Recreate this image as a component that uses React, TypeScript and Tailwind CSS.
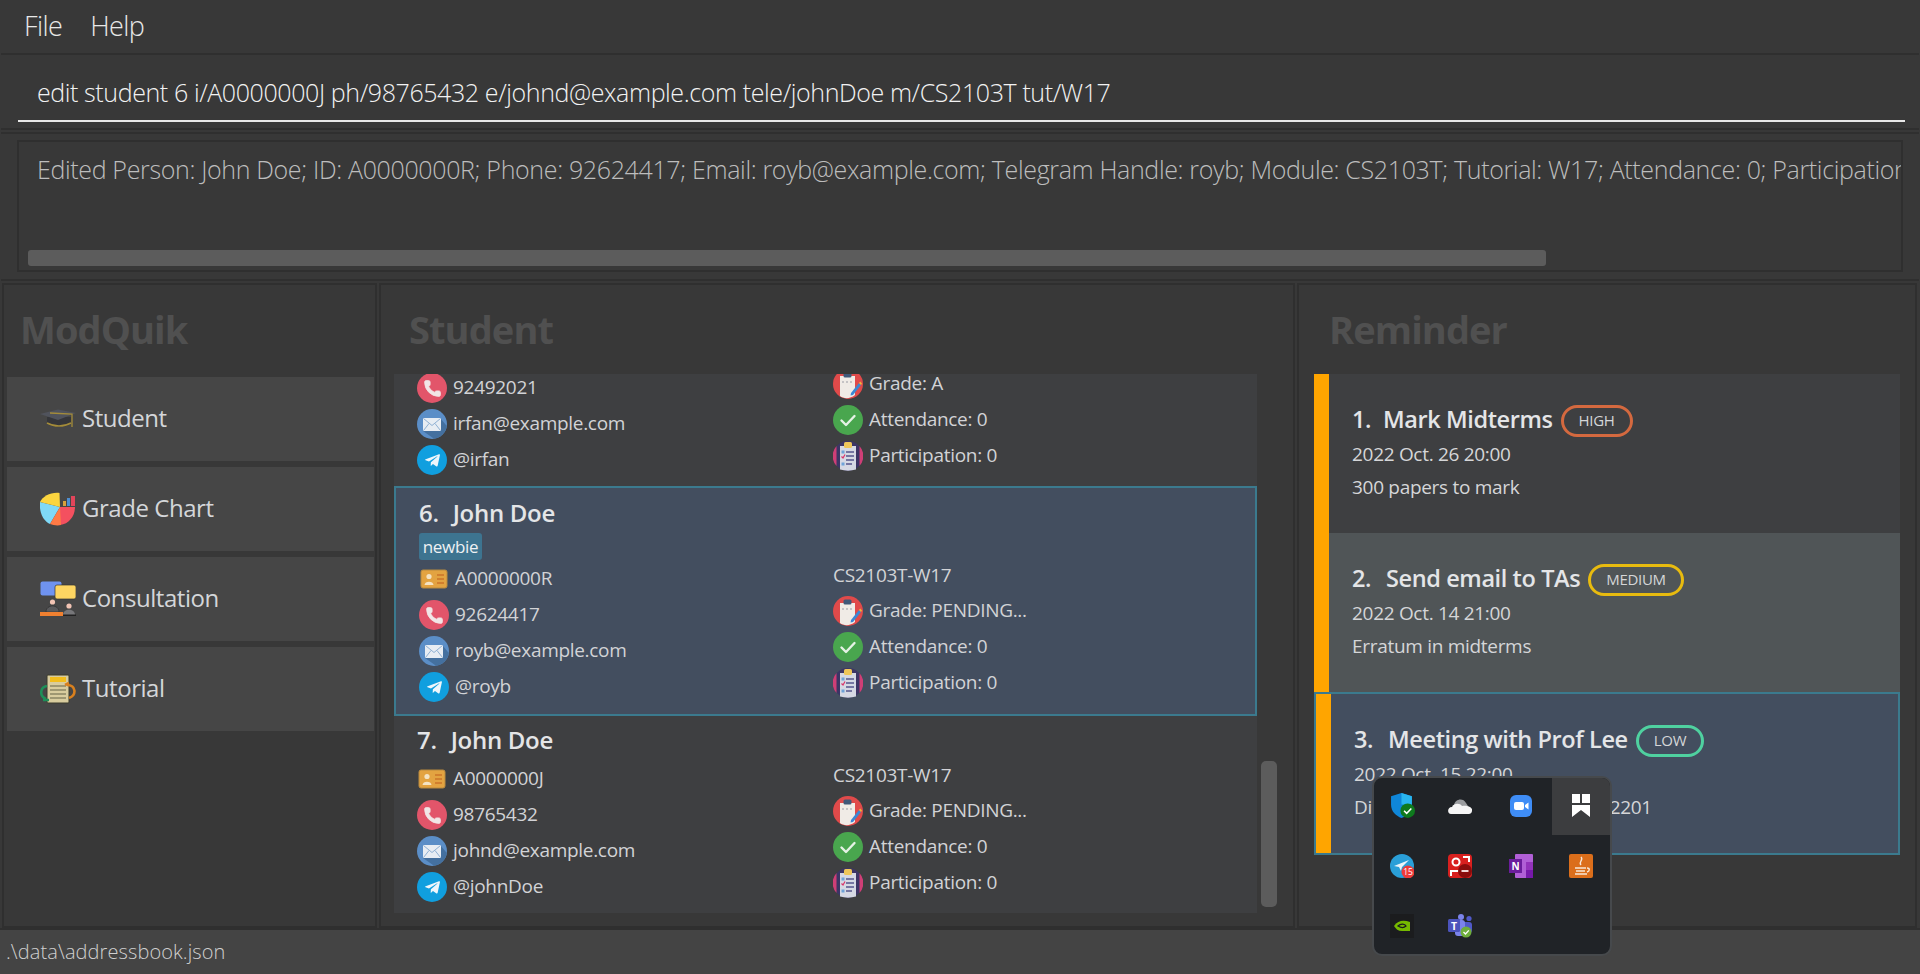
import type { ReactNode } from 'react'
import { FaTelegramPlane } from 'react-icons/fa'
import { Phone } from 'lucide-react'

type Student = {
  index: number
  name: string
  tag?: string
  id: string
  phone: string
  email: string
  tele: string
  module: string
  grade: string
}

const font = 'font-["Open_Sans","Noto_Sans",sans-serif]'

function PhoneIcon() {
  return (
    <span className="flex h-[30px] w-[30px] shrink-0 items-center justify-center rounded-full bg-[#e2556a] text-[#f1e6e6]">
      <Phone className="h-[19px] w-[19px]" fill="currentColor" strokeWidth={1} />
    </span>
  )
}

function MailIcon() {
  return (
    <svg viewBox="0 0 30 30" className="h-[30px] w-[30px] shrink-0">
      <circle cx="15" cy="15" r="15" fill="#5b8ec7" />
      <path d="M6 22 L17 29.8 C24 29 29 23 29.8 17 L24 10 Z" fill="#44709f" />
      <rect x="6" y="9" width="18" height="13" rx="1" fill="#e8edf3" />
      <path d="M6.5 9.5 L15 16.5 L23.5 9.5 M6.5 21.5 L12 14.5 M23.5 21.5 L18 14.5" fill="none" stroke="#8fb0d3" strokeWidth="1" />
    </svg>
  )
}

function TelegramIcon() {
  return (
    <span className="flex h-[30px] w-[30px] shrink-0 items-center justify-center rounded-full bg-[#109fdf] text-[#eef6fb]">
      <FaTelegramPlane className="h-[17px] w-[17px]" />
    </span>
  )
}

function IdIcon() {
  return (
    <svg viewBox="0 0 30 30" className="h-[30px] w-[30px] shrink-0">
      <rect x="2" y="6" width="26" height="18" rx="2" fill="#e3a341" stroke="#b98a3f" strokeWidth="1" />
      <circle cx="10" cy="12.5" r="2.6" fill="#f4e3c3" />
      <path d="M5.5 21 C5.5 16.5 14.5 16.5 14.5 21 Z" fill="#f4e3c3" />
      <path d="M18 11 H25 M18 15 H25 M18 19 H25" stroke="#d17f2e" strokeWidth="2" />
    </svg>
  )
}

function GradeIcon() {
  return (
    <svg viewBox="0 0 30 30" className="h-[30px] w-[30px] shrink-0">
      <circle cx="15" cy="15" r="15" fill="#e04a4a" />
      <path d="M7 7 H22 V26 C17 30 11 30 7 27 Z" fill="#f0ebe6" />
      <rect x="10.5" y="3.5" width="8" height="5" rx="1.5" fill="#3f5878" />
      <path d="M10 12 V14 M14 12 V14 M18 12 V14" stroke="#a9a9b0" strokeWidth="1.2" />
      <path d="M18 24 L26 14 L28 16 L20 26 L17.5 26.5 Z" fill="#3b87d4" />
      <path d="M26 14 L27.2 12.6 L29 14.4 L28 16 Z" fill="#f0b43c" />
    </svg>
  )
}

function AttendanceIcon() {
  return (
    <svg viewBox="0 0 30 30" className="h-[30px] w-[30px] shrink-0">
      <circle cx="15" cy="15" r="15" fill="#49a64e" />
      <path d="M8.5 15.5 L13 20 L21.5 11" fill="none" stroke="#e5f2e5" strokeWidth="2.4" strokeLinecap="round" strokeLinejoin="round" />
    </svg>
  )
}

function ParticipationIcon() {
  return (
    <svg viewBox="0 0 30 30" className="h-[30px] w-[30px] shrink-0">
      <circle cx="15" cy="15" r="15" fill="#3c3565" />
      <path d="M3.5 5 A15 15 0 0 0 3.5 25 Z M26.5 5 A15 15 0 0 1 26.5 25 Z" fill="#cf3f76" />
      <path d="M7 5 H23 V28.5 C18 30 12 30 7 28.5 Z" fill="#d6d9e4" />
      <rect x="11" y="1" width="8" height="6" rx="1.5" fill="#eec65a" />
      <path d="M13 11 H21 M13 15 H21 M13 19 H21 M13 23 H19" stroke="#55568c" strokeWidth="1.4" />
      <rect x="8.5" y="9.5" width="3" height="3" fill="#6fa3d8" />
      <path d="M8.5 15.5 L10 17 L12 13.5" fill="none" stroke="#d9366b" strokeWidth="1.2" />
      <rect x="8.5" y="21.5" width="3" height="3" fill="#6fa3d8" />
    </svg>
  )
}

function Row({ icon, children }: { icon: ReactNode; children: ReactNode }) {
  return (
    <div className="flex h-[36px] items-center gap-[6px] whitespace-nowrap text-[19px] tracking-[-0.3px] text-[#d2d3d6]">
      {icon}
      <span className="pb-[2px]">{children}</span>
    </div>
  )
}

function PartialCard({ s }: { s: Student }) {
  // only the lower part of this card is scrolled into view
  return (
    <div className="flex h-[112px] bg-[#3e3f41] pl-[23px]">
      <div className="-mt-[4px] w-[416px]">
        <Row icon={<PhoneIcon />}>{s.phone}</Row>
        <Row icon={<MailIcon />}>{s.email}</Row>
        <Row icon={<TelegramIcon />}>{s.tele}</Row>
      </div>
      <div className="-mt-[8px]">
        <Row icon={<GradeIcon />}>Grade: {s.grade}</Row>
        <Row icon={<AttendanceIcon />}>Attendance: 0</Row>
        <Row icon={<ParticipationIcon />}>Participation: 0</Row>
      </div>
    </div>
  )
}

function StudentCard({ s, selected }: { s: Student; selected?: boolean }) {
  return (
    <div
      className={
        selected
          ? 'border-2 border-[#3b7a8e] bg-[#434e5f] pb-[9px] pl-[23px] pt-[9px]'
          : 'bg-[#3e3f41] pb-[8px] pl-[23px] pt-[8px]'
      }
    >
      <div className="flex h-[34px] items-center gap-[14px] whitespace-pre pb-[2px] text-[24px] font-semibold tracking-[-0.3px] text-[#e4e5e7]">
        <span>{s.index}.</span>
        <span>{s.name}</span>
      </div>
      {s.tag ? (
        <div className="mb-[1px] mt-[2px] flex h-[27px] w-[63px] items-center justify-center rounded-[3px] bg-[#3d7490] text-[17px] font-medium tracking-[-0.3px] text-[#eef1f3]">
          {s.tag}
        </div>
      ) : (
        <div className="h-[3px]" />
      )}
      <div className="flex">
        <div className={selected ? 'w-[414px]' : 'w-[416px]'}>
          <Row icon={<IdIcon />}>{s.id}</Row>
          <Row icon={<PhoneIcon />}>{s.phone}</Row>
          <Row icon={<MailIcon />}>{s.email}</Row>
          <Row icon={<TelegramIcon />}>{s.tele}</Row>
        </div>
        <div className="-mt-[2px]">
          <div className="flex h-[34px] items-center pb-[1px] text-[19px] tracking-[-0.3px] text-[#d2d3d6]">{s.module}</div>
          <Row icon={<GradeIcon />}>Grade: {s.grade}</Row>
          <Row icon={<AttendanceIcon />}>Attendance: 0</Row>
          <Row icon={<ParticipationIcon />}>Participation: 0</Row>
        </div>
      </div>
    </div>
  )
}

function CapIcon() {
  return (
    <svg viewBox="0 0 36 20" className="h-[20px] w-[36px] shrink-0">
      <path d="M7 8 V15 C14 19 24 19 31 15 V8 Z" fill="#35363a" />
      <path d="M0 5 L18 0.5 L36 4 L18 11 Z" fill="#50535c" />
      <path d="M7 14 C14 18 24 18 31 14" fill="none" stroke="#a48c3a" strokeWidth="1.5" />
      <path d="M10 4 L32 5 V18" fill="none" stroke="#a48c3a" strokeWidth="1.3" />
    </svg>
  )
}

function PieIcon() {
  return (
    <svg viewBox="0 0 36 36" className="h-[36px] w-[36px] shrink-0">
      <path d="M20 16 L10 33 C3 30 -1 21 0 11 Z" fill="#7fd9f7" />
      <path d="M20 16 L0 11 C3 5 11 1 19.5 2 Z" fill="#fbd53f" />
      <path d="M20 16 H35 C35 25 29 33 20 34 Z" fill="#f4505f" />
      <path d="M20 16 L10 33 C13 34 17 35 21 34 Z" fill="#ff7a45" />
      <path d="M23 15 V10 H26 V15 Z" fill="#d9a13b" />
      <path d="M27 15 V7 H30 V15 Z" fill="#4d8ed0" />
      <path d="M31 15 V5 H35 V15 Z" fill="#e2455a" />
    </svg>
  )
}

function ConsultIcon() {
  return (
    <svg viewBox="0 0 36 36" className="h-[36px] w-[36px] shrink-0">
      <rect x="0.5" y="0.5" width="21" height="14" rx="2" fill="#6f93f0" />
      <rect x="15" y="4" width="21" height="14" rx="2" fill="#fdd562" stroke="#333" strokeWidth="0.7" />
      <circle cx="12.5" cy="21" r="2.6" fill="#f2c4b4" />
      <circle cx="29" cy="25" r="2.6" fill="#f2c4b4" />
      <path d="M6 31 C6 23 19 23 19 31 Z" fill="#5a5a5c" stroke="#2a2a2a" strokeWidth="0.6" />
      <path d="M23 34 C23 27 35 27 35 34 Z" fill="#77777a" />
      <rect x="0" y="31" width="23" height="4" fill="#f08030" />
      <rect x="23" y="33.5" width="13" height="1.5" fill="#222" />
    </svg>
  )
}

function TutorialIcon() {
  return (
    <svg viewBox="0 0 36 30" className="h-[30px] w-[36px] shrink-0">
      <rect x="7" y="1" width="22" height="28" rx="1" fill="#d8cc9e" stroke="#3b3a2c" strokeWidth="1" />
      <rect x="10" y="3" width="16" height="5" fill="#f2bd1d" />
      <path d="M10 12 H26 M10 16 H26 M10 20 H26 M10 24 H26" stroke="#8b8564" strokeWidth="1.4" />
      <path d="M7 12 C0 13 -1 22 6 25 M3 26 L9 26" fill="none" stroke="#1e8f58" strokeWidth="2.6" />
      <path d="M27 11 C36 11 37 21 29 24 M25 11 L29 9" fill="none" stroke="#d9801e" strokeWidth="2.6" />
    </svg>
  )
}

function NavButton({ icon, label }: { icon: ReactNode; label: string }) {
  return (
    <div className="flex h-[84px] items-center bg-[#464646] pl-[33px] text-[24px] font-medium tracking-[-0.45px] text-[#d4d6d9]">
      <span className="flex w-[42px] items-center">{icon}</span>
      <span className="pb-[2px]">{label}</span>
    </div>
  )
}

function PanelTitle({ children }: { children: ReactNode }) {
  return <div className="flex h-[89px] items-center text-[38px] font-bold tracking-[-0.9px] text-[#505050]">{children}</div>
}

function ReminderCard({
  index, title, badge, badgeColor, date, desc, bg, selected,
}: {
  index: number; title: string; badge: string; badgeColor: string; date: string; desc: ReactNode; bg: string; selected?: boolean
}) {
  return (
    <div className={(selected ? 'h-[163px] border-2 border-[#3b7a8e] ' : 'h-[159px] ') + 'flex ' + bg}>
      <div className="w-[15px] shrink-0 bg-[#ffa500]" />
      <div className="flex flex-col justify-center pl-[23px] text-[#d5d6d8]">
        <div className="flex h-[36px] items-center gap-[8px] whitespace-pre text-[23.5px] font-semibold tracking-[-0.4px] text-[#e4e5e7]">
          <span className={'flex pb-[2px] ' + (index === 1 ? 'gap-[12px]' : 'gap-[15px]')}>
            <span>{index}.</span>
            <span>{title}</span>
          </span>
          <span className={'flex h-[32px] items-center rounded-[16px] border-[3px] px-[15px] text-[15px] font-normal tracking-[-0.3px] text-[#d5d6d8] ' + badgeColor}>{badge}</span>
        </div>
        <div className="flex h-[33px] items-center whitespace-nowrap pb-[2px] text-[19px] tracking-[-0.3px]">{date}</div>
        <div className="flex h-[33px] items-center whitespace-nowrap pb-[2px] text-[19px] tracking-[-0.3px]">{desc}</div>
      </div>
    </div>
  )
}

function TrayPopup() {
  return (
    <div className="absolute left-[1372px] top-[776px] h-[180px] w-[240px] overflow-hidden rounded-[10px] border-2 border-[#46494c] bg-[#202327]">
      <div className="grid grid-cols-[56px_59px_63px_58px] grid-rows-[57px_62px_58px]">
        <div className="flex items-center justify-center pb-[2px]">
          <svg viewBox="0 0 24 24" className="h-[25px] w-[25px]">
            <path d="M11 0 L21 3 V11 C21 18 16 22 11 24 C6 22 1 18 1 11 V3 Z" fill="#0f86d8" />
            <path d="M11 0 L21 3 V11 H11 Z" fill="#29b6f0" />
            <circle cx="17" cy="17" r="7" fill="#0e7a1d" />
            <path d="M13.5 17 L16 19.5 L20.5 14.8" fill="none" stroke="#fff" strokeWidth="1.5" />
          </svg>
        </div>
        <div className="flex items-center justify-center pb-[2px]">
          <svg viewBox="0 0 24 16" className="h-[16px] w-[24px]">
            <path d="M6 7 C7 1 15 -1 18 5 L20 8 H4 Z" fill="#9a9c9f" />
            <path d="M3 16 C-1 16 -1 9 4 9 C6 5 12 5 14 8 C19 7 25 9 24 13 C24 15 22 16 21 16 Z" fill="#f5f5f5" />
          </svg>
        </div>
        <div className="flex items-center justify-center pb-[2px]">
          <svg viewBox="0 0 22 22" className="h-[22px] w-[22px]">
            <rect width="22" height="22" rx="6" fill="#3f8df6" />
            <rect x="4" y="7" width="10" height="8" rx="2" fill="#fff" />
            <path d="M15 10 L18.5 7.5 V14.5 L15 12 Z" fill="#fff" />
          </svg>
        </div>
        <div className="flex items-center justify-center bg-[#3c3d3f] pb-[2px]">
          <svg viewBox="0 0 18 23" className="h-[23px] w-[18px]">
            <path d="M0 0 H8 V9 H0 Z M10 0 H18 V9 H10 Z M0 11 H18 V23 L9 16 L0 23 Z" fill="#fff" />
          </svg>
        </div>
        <div className="flex items-center justify-center">
          <svg viewBox="0 0 24 24" className="h-[24px] w-[24px]">
            <circle cx="12" cy="12" r="12" fill="#2a9fd8" />
            <path d="M4 12 L19 6 L12 13 L11 17 L9 13 Z" fill="#eaf5fb" />
            <circle cx="18" cy="18" r="6.5" fill="#ee3a3a" />
            <text x="18" y="21" fontSize="8.5" fill="#fff" textAnchor="middle" fontFamily="Open Sans, sans-serif">15</text>
          </svg>
        </div>
        <div className="flex items-center justify-center">
          <svg viewBox="0 0 24 24" className="h-[24px] w-[24px]">
            <rect width="24" height="24" rx="4" fill="#d8201f" />
            <circle cx="8" cy="8" r="3.5" fill="none" stroke="#fff" strokeWidth="2" />
            <path d="M3 22 V17 H12 M15 3 H21 V8" fill="none" stroke="#fff" strokeWidth="2" />
            <circle cx="17" cy="17" r="7" fill="#8a0d0d" />
            <rect x="13.5" y="16" width="7" height="2" fill="#f3d6d6" />
          </svg>
        </div>
        <div className="flex items-center justify-center">
          <svg viewBox="0 0 24 24" className="h-[24px] w-[24px]">
            <rect x="6" y="0" width="18" height="24" rx="1" fill="#b15fd6" />
            <rect x="17" y="8" width="7" height="8" fill="#9333bb" />
            <rect x="17" y="16" width="7" height="8" fill="#7719aa" />
            <rect x="0" y="5" width="13" height="14" fill="#6b1d9c" />
            <text x="6.5" y="16" fontSize="10" fontWeight="700" fill="#fff" textAnchor="middle" fontFamily="Open Sans, sans-serif">N</text>
          </svg>
        </div>
        <div className="flex items-center justify-center">
          <svg viewBox="0 0 24 24" className="h-[24px] w-[24px]">
            <rect width="24" height="24" rx="2" fill="#db6e1b" />
            <path d="M12 3 C15 6 9 8 12 11 M6 14 H17 M7 17 H16 M6 20 H18 M18 14 C21 14 21 17 18 18" fill="none" stroke="#f7e7d8" strokeWidth="1.4" />
          </svg>
        </div>
        <div className="flex items-center justify-center">
          <svg viewBox="0 0 24 24" className="h-[24px] w-[24px]">
            <rect width="24" height="24" fill="#1b1c1e" />
            <path d="M4 12 C8 6 14 6 20 8 V17 H12 C8 17 6 15 4 12 Z" fill="#76b900" />
            <path d="M8 12 C11 9 15 10 16 12 C14 14 11 14 8 12 Z" fill="none" stroke="#1b1c1e" strokeWidth="1.3" />
          </svg>
        </div>
        <div className="flex items-center justify-center">
          <svg viewBox="0 0 24 24" className="h-[24px] w-[24px]">
            <circle cx="13" cy="3" r="3" fill="#7b83eb" />
            <circle cx="21" cy="4.5" r="2.6" fill="#5059c9" />
            <rect x="13" y="8" width="11" height="11" rx="3" fill="#5059c9" />
            <rect x="7" y="6" width="10" height="16" rx="3" fill="#7b83eb" />
            <rect x="0" y="5" width="12" height="13" rx="1.5" fill="#4b53bc" />
            <text x="6" y="15.5" fontSize="10.5" fontWeight="700" fill="#fff" textAnchor="middle" fontFamily="Open Sans, sans-serif">T</text>
            <circle cx="18" cy="18" r="5.5" fill="#6fae3c" />
            <path d="M15.5 18 L17.5 20 L20.8 16.4" fill="none" stroke="#fff" strokeWidth="1.3" />
          </svg>
        </div>
      </div>
    </div>
  )
}

const students: Student[] = [
  { index: 5, name: 'Irfan', id: '', phone: '92492021', email: 'irfan@example.com', tele: '@irfan', module: '', grade: 'A' },
  { index: 6, name: 'John Doe', tag: 'newbie', id: 'A0000000R', phone: '92624417', email: 'royb@example.com', tele: '@royb', module: 'CS2103T-W17', grade: 'PENDING...' },
  { index: 7, name: 'John Doe', id: 'A0000000J', phone: '98765432', email: 'johnd@example.com', tele: '@johnDoe', module: 'CS2103T-W17', grade: 'PENDING...' },
]

export default function App() {
  return (
    <div className={'relative flex h-[974px] w-[1920px] flex-col overflow-hidden bg-[#383838] ' + font}>
      <div className="flex h-[53px] items-center gap-[28px] pl-[24px] text-[27px] font-light tracking-[-0.6px] text-[#e8e8e8]">
        <span>File</span>
        <span>Help</span>
      </div>

      <div className="mx-[1px] h-[77px] border-y-2 border-y-[#2f2f2f] pl-[17px] pr-[14px]">
        <div className="flex h-[67px] items-center whitespace-nowrap border-b-2 border-b-[#e8e8e8] pl-[19px] pt-[10px] text-[25px] font-light tracking-[-0.4px] text-[#f2f2f2]">
          edit student 6 i/A0000000J ph/98765432 e/johnd@example.com tele/johnDoe m/CS2103T tut/W17
        </div>
      </div>

      <div className="mx-[1px] mt-[2px] h-[149px] border-y-2 border-y-[#2f2f2f] px-[16px] pt-[6px]">
        <div className="relative h-[132px] overflow-hidden border-2 border-[#2f2f2f]">
          <div className="whitespace-nowrap pl-[18px] pt-[9px] text-[25px] font-light tracking-[-0.35px] text-[#bdbdbd]">
            Edited Person: John Doe; ID: A0000000R; Phone: 92624417; Email: royb@example.com; Telegram Handle: royb; Module: CS2103T; Tutorial: W17; Attendance: 0; Participation: 0
          </div>
          <div className="absolute bottom-[4px] left-[9px] h-[16px] w-[1518px] rounded-[3px] bg-[#5c5c5c]" />
        </div>
      </div>

      <div className="mt-[2px] flex h-[645px] gap-[2px] pl-[2px] pr-[3px]">
        <div className="w-[375px] border-2 border-[#2f2f2f] pl-[3px] pr-[1px]">
          <div className="pl-[13px]"><PanelTitle>ModQuik</PanelTitle></div>
          <div className="mt-[3px] flex flex-col gap-[6px]">
            <NavButton icon={<CapIcon />} label="Student" />
            <NavButton icon={<PieIcon />} label="Grade Chart" />
            <NavButton icon={<ConsultIcon />} label="Consultation" />
            <NavButton icon={<TutorialIcon />} label="Tutorial" />
          </div>
        </div>

        <div className="w-[916px] border-2 border-[#2f2f2f] pl-[13px]">
          <div className="pl-[15px]"><PanelTitle>Student</PanelTitle></div>
          <div className="flex gap-[4px]">
            <div className="h-[539px] w-[863px] overflow-hidden bg-[#3e3f41]">
              <PartialCard s={students[0]} />
              <StudentCard s={students[1]} selected />
              <StudentCard s={students[2]} />
            </div>
            <div className="mt-[387px] h-[146px] w-[16px] rounded-[5px] bg-[#5c5c5c]" />
          </div>
        </div>

        <div className="flex-1 border-2 border-[#2f2f2f] pl-[15px]">
          <div className="pl-[15px]"><PanelTitle>Reminder</PanelTitle></div>
          <div className="w-[586px]">
            <ReminderCard index={1} title="Mark Midterms" badge="HIGH" badgeColor="border-[#d4693f]" date="2022 Oct. 26 20:00" desc="300 papers to mark" bg="bg-[#3e3f41]" />
            <ReminderCard index={2} title="Send email to TAs" badge="MEDIUM" badgeColor="border-[#e8bb0f]" date="2022 Oct. 14 21:00" desc="Erratum in midterms" bg="bg-[#505557]" />
            <ReminderCard index={3} title="Meeting with Prof Lee" badge="LOW" badgeColor="border-[#4fd1a0]" date="2022 Oct. 15 22:00" desc="Discuss paper results at COM 2201" bg="bg-[#434e5f]" selected />
          </div>
        </div>
      </div>

      <div className="flex flex-1 items-center border-t-2 border-t-[#2f2f2f] bg-[#444444] pl-[6px] text-[20px] font-light tracking-[0.1px] text-[#d0d0d0]">
        .\data\addressbook.json
      </div>

      <TrayPopup />
    </div>
  )
}
